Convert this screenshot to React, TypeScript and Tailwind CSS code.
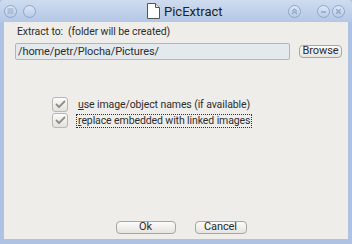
import React from "react";

function CircleBtn({ children }: { children?: React.ReactNode }) {
  return (
    <div className="w-[13px] h-[13px] rounded-full border border-[#8ea6c9] bg-gradient-to-b from-[#dde7f5] to-[#b9cbe6] flex items-center justify-center">
      {children}
    </div>
  );
}

function Check({ focused, label, u }: { focused?: boolean; label: string; u: string }) {
  return (
    <div className="flex items-center h-[15px]">
      <div className="w-[16px] h-[15px] rounded-[3px] border border-[#b9b7b1] bg-gradient-to-b from-[#fbfbfa] to-[#e4e2dc] flex items-center justify-center">
        <svg width="11" height="9" viewBox="0 0 11 9">
          <path d="M1.5 4.5 L4 7 L9.5 1.5" fill="none" stroke="#8f8e8a" strokeWidth="1.8" strokeLinecap="round" strokeLinejoin="round" />
        </svg>
      </div>
      <div className={"ml-[8px] px-[1px] leading-[12px] " + (focused ? "border border-dotted border-[#333]" : "border border-transparent")}>
        <span className="underline underline-offset-1">{u}</span>
        {label}
      </div>
    </div>
  );
}

function Btn({ children, w }: { children: React.ReactNode; w: string }) {
  return (
    <div className={"h-[13px] rounded-[4px] border border-[#a8a69f] bg-gradient-to-b from-[#fbfbfa] to-[#e6e4df] flex items-center justify-center text-[11px] text-[#2b2b2b] " + w}>
      {children}
    </div>
  );
}

export default function App() {
  return (
    <div
      className="w-[352px] h-[244px] bg-[#aec3e3] flex flex-col text-[#2e2e2e]"
      style={{ fontFamily: 'Roboto, "Open Sans", "DejaVu Sans", sans-serif' }}
    >
      {/* Title bar */}
      <div className="h-[22px] bg-gradient-to-b from-[#cfdcef] to-[#b4c7e5] flex items-center px-[4px] relative rounded-t-[4px]">
        <div className="flex gap-[6px]">
          <CircleBtn>
            <svg width="7" height="6" viewBox="0 0 7 6">
              <path d="M0.5 1H6.5M0.5 3H6.5M0.5 5H6.5" stroke="#8ea6c9" strokeWidth="1" />
            </svg>
          </CircleBtn>
          <CircleBtn />
        </div>
        <div className="absolute left-[147px] top-[3px] flex items-center">
          <svg width="13" height="16" viewBox="0 0 13 16">
            <path d="M0.5 0.5H8.5L12.5 4.5V15.5H0.5Z" fill="#ffffff" stroke="#555" strokeWidth="1" />
            <path d="M8.5 0.5V4.5H12.5" fill="#e6e6e6" stroke="#555" strokeWidth="1" />
          </svg>
          <span className="ml-[4px] text-[13px] text-[#222] leading-none">PicExtract</span>
        </div>
        <div className="ml-auto flex items-center">
          <CircleBtn>
            <svg width="7" height="7" viewBox="0 0 7 7">
              <path d="M1 3.5L3.5 1L6 3.5M1 6L3.5 3.5L6 6" fill="none" stroke="#8ea6c9" strokeWidth="1.1" />
            </svg>
          </CircleBtn>
          <div className="w-[16px]" />
          <CircleBtn>
            <svg width="7" height="7" viewBox="0 0 7 7">
              <path d="M1 4H6" stroke="#8ea6c9" strokeWidth="1.5" />
            </svg>
          </CircleBtn>
          <div className="w-[2px]" />
          <CircleBtn>
            <svg width="7" height="7" viewBox="0 0 7 7">
              <path d="M1.2 1.2L5.8 5.8M5.8 1.2L1.2 5.8" stroke="#8ea6c9" strokeWidth="1.4" />
            </svg>
          </CircleBtn>
          <div className="w-[3px]" />
        </div>
      </div>

      {/* Content */}
      <div className="flex-1 ml-[4px] mr-[4px] mb-[5px] bg-[#eeede9] flex flex-col text-[10.5px] tracking-[-0.1px]">
        <div className="pl-[13px] pt-[3px] leading-[14px]">Extract to:&nbsp; (folder will be created)</div>
        <div className="flex items-center mt-[4px] pl-[11px]">
          <div className="w-[275px] h-[17px] rounded-[2px] border border-[#b3b6b8] bg-[#e4e9ee] flex items-center pl-[2px] leading-none text-[11px]">
            /home/petr/Plocha/Pictures/
          </div>
          <div className="ml-[9px]">
            <Btn w="w-[43px]">Browse</Btn>
          </div>
        </div>
        <div className="mt-[37px] pl-[48px] flex flex-col gap-[1px]">
          <Check u="u" label="se image/object names (if available)" />
          <Check focused u="r" label="eplace embedded with linked images" />
        </div>
        <div className="mt-auto mb-[5px] flex justify-center gap-[19px] pl-[10px]">
          <Btn w="w-[60px]">Ok</Btn>
          <Btn w="w-[52px]">Cancel</Btn>
        </div>
      </div>
    </div>
  );
}
